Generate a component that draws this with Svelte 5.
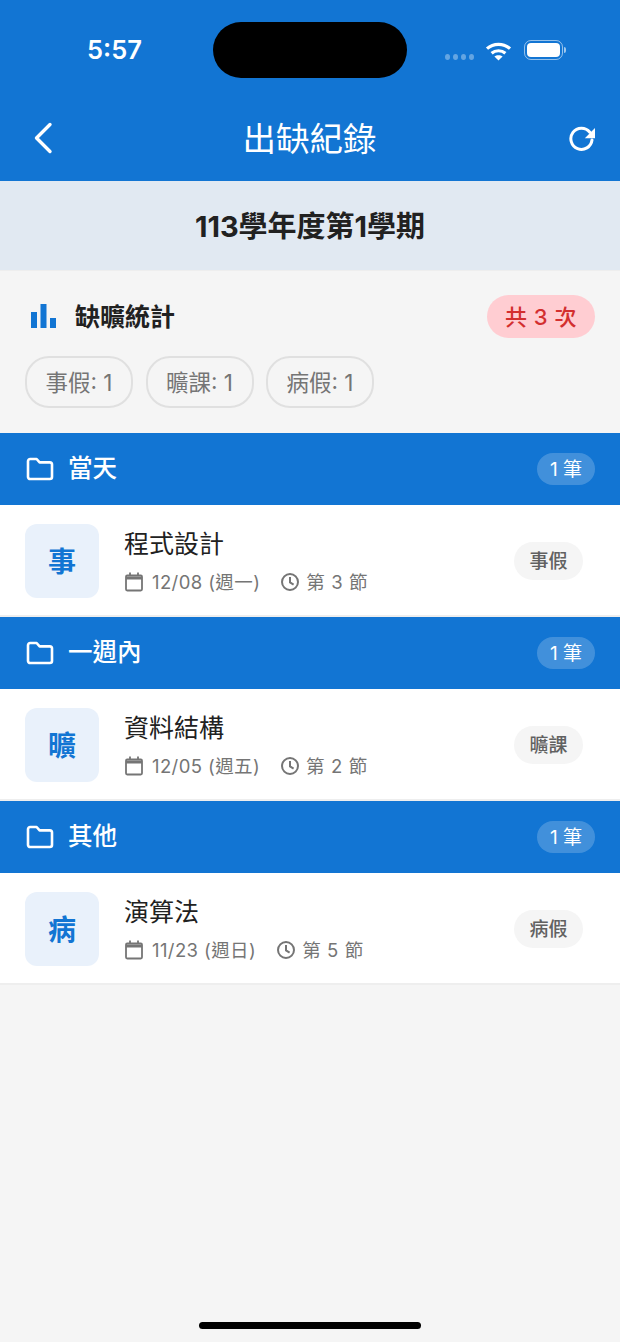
<script>
  const chips = ['事假: 1', '曠課: 1', '病假: 1'];
  const groups = [
    { name: '當天', mark: '事', course: '程式設計', date: '12/08 (週一)', period: '第 3 節', tag: '事假' },
    { name: '一週內', mark: '曠', course: '資料結構', date: '12/05 (週五)', period: '第 2 節', tag: '曠課' },
    { name: '其他', mark: '病', course: '演算法', date: '11/23 (週日)', period: '第 5 節', tag: '病假' }
  ];
</script>

<div class="page">
  <header class="top">
    <div class="status">
      <span class="time">5:57</span>
      <span class="island"></span>
      <div class="sys">
        <span class="dots"><i></i><i></i><i></i><i></i></span>
        <svg class="wifi" width="27" height="20" viewBox="0 0 27 20" fill="none" stroke="#fff" stroke-width="3.2">
          <path d="M2 7.6C8.4 1.9 18.6 1.9 25 7.6" />
          <path d="M6.6 12.2C10.4 8.9 16.6 8.9 20.4 12.2" />
          <path d="M13.5 19.6 L9.4 15.6C11.6 13.9 15.4 13.9 17.6 15.6Z" fill="#fff" stroke="none" />
        </svg>
        <span class="battery"><span class="cell"></span></span>
        <span class="nub"></span>
      </div>
    </div>
    <div class="nav">
      <svg class="back" width="24" height="32" viewBox="0 0 24 32" fill="none" stroke="#fff" stroke-width="3.4" stroke-linecap="round" stroke-linejoin="round"><path d="M18 2.5 L4.5 16 L18 29.5" /></svg>
      <h1>出缺紀錄</h1>
      <svg class="refresh" width="28" height="28" viewBox="0 0 28 28" fill="none"><path d="M20.8 8.2A10.6 10.6 0 1 0 23 16" stroke="#fff" stroke-width="3" stroke-linecap="round" /><path d="M26 4V14.2H15.8Z" fill="#fff" /></svg>
    </div>
  </header>

  <div class="term">113學年度第1學期</div>

  <section class="stats">
    <div class="stats-head">
      <div class="stats-title">
        <svg width="26" height="26" viewBox="0 0 26 26" fill="#1275d3"><rect x="0" y="8" width="6" height="16" /><rect x="9.5" y="0" width="6" height="24" /><rect x="19" y="14" width="6" height="10" /></svg>
        <span class="label">缺曠統計</span>
      </div>
      <span class="total">共 3 次</span>
    </div>
    <div class="chips">
      {#each chips as chip}
        <span class="chip">{chip}</span>
      {/each}
    </div>
  </section>

  {#each groups as g}
    <div class="group">
      <div class="group-title">
        <svg width="28" height="24" viewBox="0 0 28 24" fill="none" stroke="#fff" stroke-width="2.6" stroke-linejoin="round"><path d="M2 4.2C2 3 3 2 4.2 2H10.6L13.6 5.4H23.8C25 5.4 26 6.4 26 7.6V20C26 21.2 25 22 23.8 22H4.2C3 22 2 21.2 2 20Z" /></svg>
        <span class="name">{g.name}</span>
      </div>
      <span class="count">1 筆</span>
    </div>
    <div class="row">
      <div class="mark">{g.mark}</div>
      <div class="info">
        <div class="course">{g.course}</div>
        <div class="meta">
          <svg width="20" height="20" viewBox="0 0 20 20" fill="none" stroke="#757575" stroke-width="1.8"><rect x="2" y="3.5" width="16" height="15" rx="1.2" /><path d="M2 6H18" stroke-width="3" /><path d="M6 .5V4M14 .5V4" /></svg>
          <span class="date">{g.date}</span>
          <svg width="20" height="20" viewBox="0 0 20 20" fill="none" stroke="#757575" stroke-width="2"><circle cx="10" cy="10" r="8" /><path d="M10 5V10.4L13.6 12.6" /></svg>
          <span class="period">{g.period}</span>
        </div>
      </div>
      <span class="tag">{g.tag}</span>
    </div>
  {/each}

  <div class="home"></div>
</div>

<style>
  :global(body) {
    margin: 0;
    background: #f5f5f5;
  }
  .page {
    width: 620px;
    height: 1342px;
    position: relative;
    overflow: hidden;
    background: #f5f5f5;
    font-family: "Inter", "Noto Sans CJK TC", sans-serif;
  }
  .top {
    background: #1275d3;
    height: 181px;
  }
  .status {
    height: 100px;
    display: grid;
    grid-template-columns: 213px 194px 213px;
    color: #fff;
  }
  .time {
    font-size: 25.5px;
    font-weight: 600;
    padding: 34px 0 0 87px;
    line-height: 32px;
  }
  .island {
    background: #000;
    width: 194px;
    height: 56px;
    margin-top: 22px;
    border-radius: 28px;
  }
  .sys {
    display: flex;
    align-items: center;
    height: 20px;
    margin-top: 40px;
    padding-left: 38px;
  }
  .dots {
    display: flex;
    gap: 3px;
    margin-top: 14px;
  }
  .dots i {
    width: 5px;
    height: 6px;
    border-radius: 50%;
    background: rgba(255, 255, 255, 0.35);
  }
  .wifi {
    margin-left: 11px;
    margin-top: 1px;
  }
  .battery {
    box-sizing: border-box;
    margin-left: 12px;
    width: 39px;
    height: 20px;
    border: 1.5px solid rgba(255, 255, 255, 0.55);
    border-radius: 7px;
    padding: 2px;
    display: flex;
  }
  .cell {
    flex: 1;
    background: #fff;
    border-radius: 4px;
  }
  .nub {
    width: 2px;
    height: 6px;
    margin-left: 1px;
    border-radius: 0 2px 2px 0;
    background: rgba(255, 255, 255, 0.6);
  }
  .nav {
    height: 81px;
    padding: 0 23px 0 32px;
    display: flex;
    align-items: center;
    justify-content: space-between;
    margin-top: -2px;
  }
  .back {
    margin-top: -2px;
  }
  .refresh {
    margin-top: -2px;
  }
  h1 {
    margin: 0;
    font-size: 33.5px;
    font-weight: 400;
    color: #fff;
    line-height: 40px;
    margin-left: -6px;
  }
  .term {
    box-sizing: border-box;
    height: 89px;
    padding-bottom: 4px;
    background: #e1e9f2;
    display: flex;
    align-items: center;
    justify-content: center;
    font-size: 29px;
    font-weight: 700;
    color: #212121;
  }
  .stats {
    box-sizing: border-box;
    height: 163px;
    padding: 24px 25px 0;
    border-top: 1px solid #eeeeee;
  }
  .stats-head {
    display: flex;
    justify-content: space-between;
    align-items: center;
  }
  .stats-title {
    display: flex;
    align-items: center;
    gap: 18px;
    padding-left: 6px;
    font-size: 25px;
    font-weight: 700;
    color: #212121;
  }
  .label {
    padding-bottom: 4px;
  }
  .total {
    box-sizing: border-box;
    width: 108px;
    height: 43px;
    padding-bottom: 4px;
    border-radius: 22px;
    background: #ffcdd2;
    color: #d32f2f;
    font-size: 22px;
    font-weight: 500;
    letter-spacing: 0.5px;
    display: flex;
    align-items: center;
    justify-content: center;
  }
  .chips {
    display: flex;
    gap: 12.5px;
    margin-top: 18px;
  }
  .chip {
    box-sizing: border-box;
    width: 108px;
    height: 52px;
    padding-bottom: 3px;
    border: 2px solid #e0e0e0;
    border-radius: 24px;
    color: #757575;
    font-size: 22.5px;
    display: flex;
    align-items: center;
    justify-content: center;
  }
  .group {
    height: 72px;
    background: #1275d3;
    padding: 0 25px;
    display: flex;
    align-items: center;
    justify-content: space-between;
  }
  .group-title {
    display: flex;
    align-items: center;
    gap: 15px;
    padding-left: 1px;
    font-size: 24.5px;
    font-weight: 500;
    color: #fff;
  }
  .name {
    padding-bottom: 6px;
    margin-left: -1px;
  }
  .count {
    box-sizing: border-box;
    width: 58px;
    height: 32px;
    padding-bottom: 4px;
    border-radius: 16px;
    background: rgba(255, 255, 255, 0.2);
    color: #fff;
    font-size: 19px;
    display: flex;
    align-items: center;
    justify-content: center;
  }
  .row {
    box-sizing: border-box;
    height: 112px;
    background: #fff;
    padding: 0 37px 0 25px;
    display: flex;
    align-items: center;
    box-shadow: inset 0 -2px #eeeeee;
  }
  .mark {
    box-sizing: border-box;
    width: 74px;
    height: 74px;
    padding-bottom: 2px;
    border-radius: 12px;
    background: #e9f1fb;
    color: #1275d3;
    font-size: 28px;
    font-weight: 700;
    display: flex;
    align-items: center;
    justify-content: center;
  }
  .info {
    flex: 1;
    margin-left: 25px;
    padding-bottom: 2px;
  }
  .course {
    font-size: 25px;
    line-height: 34px;
    color: #212121;
  }
  .meta {
    display: flex;
    align-items: center;
    margin-top: 9px;
    color: #757575;
    font-size: 18.5px;
    line-height: 24px;
  }
  .date {
    margin-left: 8px;
    margin-right: 20px;
    letter-spacing: 0.4px;
  }
  .period {
    margin-left: 6px;
    letter-spacing: 0.6px;
  }
  .tag {
    box-sizing: border-box;
    width: 69px;
    height: 38px;
    padding-bottom: 3px;
    border-radius: 19px;
    background: #f5f5f5;
    color: #616161;
    font-size: 19px;
    font-weight: 500;
    display: flex;
    align-items: center;
    justify-content: center;
  }
  .home {
    position: absolute;
    left: 199px;
    bottom: 13px;
    width: 222px;
    height: 7px;
    border-radius: 4px;
    background: #000;
  }
</style>
